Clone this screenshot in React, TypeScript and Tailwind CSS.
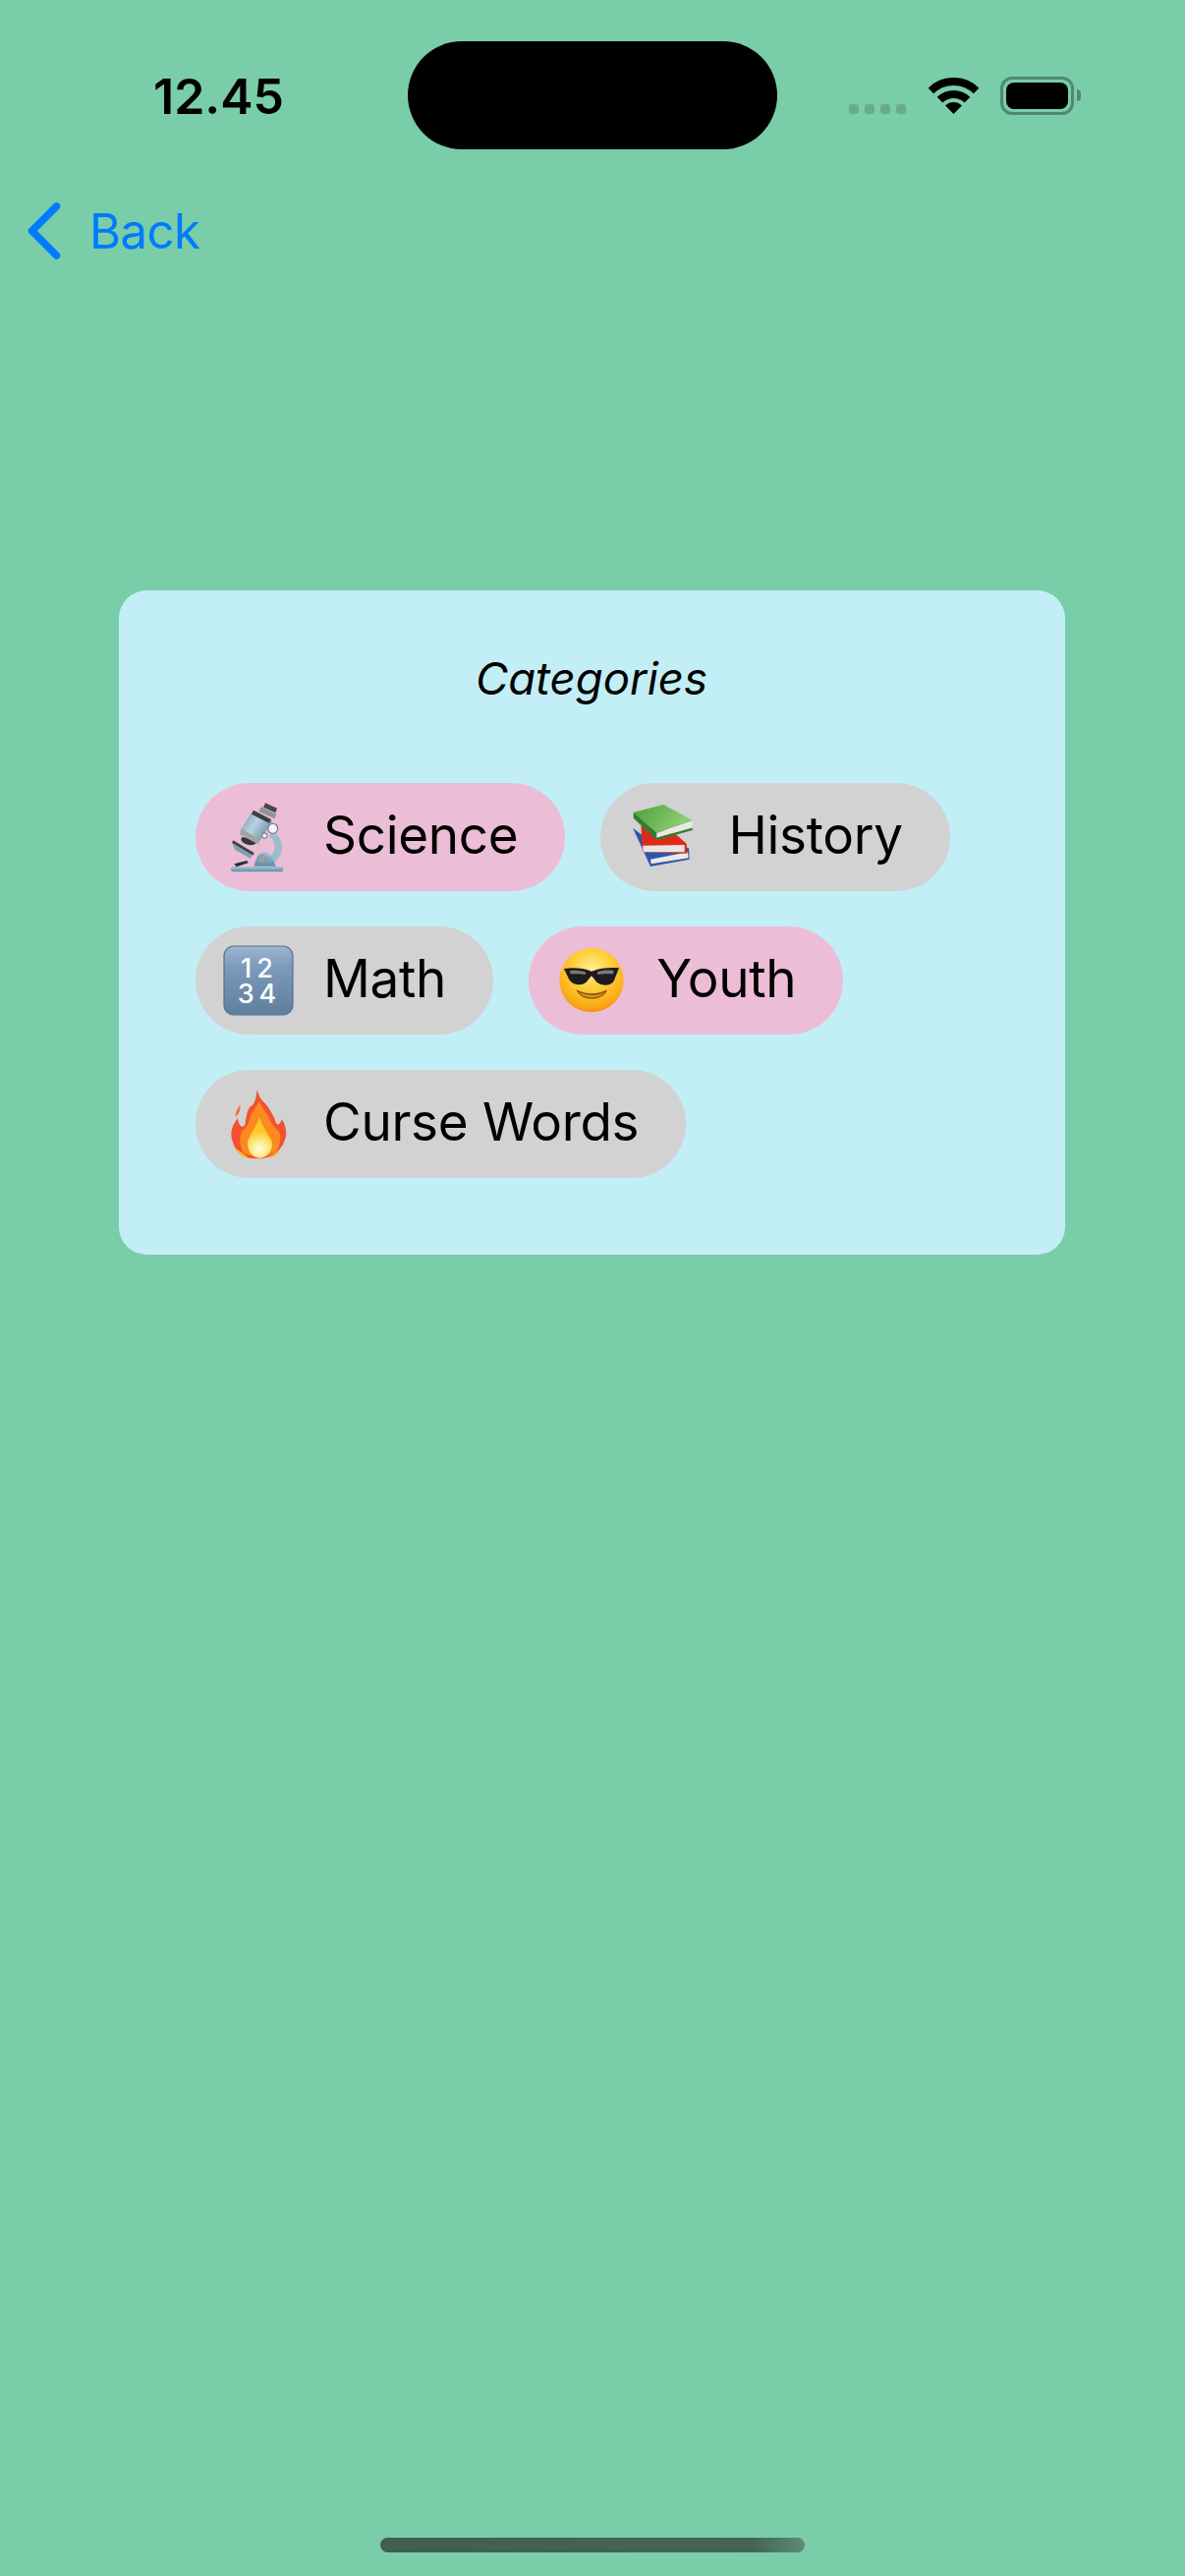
import React from 'react';

function Wifi() {
  return (
    <svg width="51" height="37" viewBox="0 0 51 37" fill="none">
      <path d="M2.4 13.4A33 33 0 0 1 48.6 13.4" stroke="#000" strokeWidth="8" />
      <path d="M11.5 22.7A20 20 0 0 1 39.5 22.7" stroke="#000" strokeWidth="8" />
      <path d="M25.5 37L17.1 28.4A12 12 0 0 1 33.9 28.4Z" fill="#000" />
    </svg>
  );
}

function Microscope() {
  return (
    <svg width="72" height="72" viewBox="141 108 216 216" fill="none">
      <defs>
        <linearGradient id="tube" x1="205" y1="150" x2="275" y2="195" gradientUnits="userSpaceOnUse">
          <stop offset="0" stopColor="#7e9fb8" />
          <stop offset="0.5" stopColor="#b9d3e2" />
          <stop offset="1" stopColor="#7f9fb4" />
        </linearGradient>
        <linearGradient id="base" x1="0" y1="0" x2="0" y2="1">
          <stop offset="0" stopColor="#a9c6d6" />
          <stop offset="1" stopColor="#5f8ca8" />
        </linearGradient>
      </defs>
      <path d="M288 205C318 228 318 268 284 290" stroke="#9dbdcd" strokeWidth="22" />
      <path d="M236 305C240 280 250 260 268 260C285 262 295 285 302 305Z" fill="url(#base)" />
      <rect x="165" y="306" width="160" height="16" rx="6" fill="url(#base)" />
      <circle cx="260" cy="283" r="13" fill="#9a9fa3" stroke="#6f8b9b" strokeWidth="2" />
      <path d="M172 226L236 264L232 272L168 234Z" fill="#3d4346" />
      <path d="M170 236L228 270L226 282L178 256Z" fill="#7f9fb4" />
      <path d="M175 298L214 288L218 295L182 307Z" fill="#2c2e30" />
      <path d="M198 216L196 226C205 240 225 245 240 236L246 224Z" fill="#34383b" />
      <path d="M232 134L292 168L250 232L193 198Z" fill="url(#tube)" />
      <path d="M196 190L254 224L248 238L192 208Z" fill="#a2a3a2" />
      <path d="M234 134L288 162L282 174L228 146Z" fill="#3a3f42" />
      <path d="M258 124L304 146L298 160L250 138Z" fill="#8d9498" />
      <path d="M270 112L306 128L301 142L264 125Z" fill="#45494c" />
      <circle cx="293" cy="190" r="15" fill="#f4f5f5" stroke="#70818b" strokeWidth="4" />
      <circle cx="268" cy="212" r="8" fill="#eef0f0" stroke="#5e6f79" strokeWidth="3" />
    </svg>
  );
}

function Books() {
  return (
    <svg width="72" height="72" viewBox="117 108 216 216" fill="none">
      <defs>
        <linearGradient id="cover" x1="170" y1="125" x2="270" y2="190" gradientUnits="userSpaceOnUse">
          <stop offset="0" stopColor="#5aa948" />
          <stop offset="1" stopColor="#8ccb72" />
        </linearGradient>
      </defs>
      <path d="M132 188L186 306L305 284L303 250L160 210Z" fill="#2e56aa" />
      <path d="M186 284L300 262L302 280L188 298Z" fill="#e9e9e6" />
      <path d="M157 182L162 262L298 266L296 236L255 200Z" fill="#e02a18" />
      <path d="M162 242L290 240L290 262L164 262Z" fill="#e6e5e1" />
      <path d="M134 140L226 117L316 166L205 204Z" fill="url(#cover)" />
      <path d="M134 140L134 158L205 226L205 204Z" fill="#2f7f2e" />
      <path d="M205 204L316 166L312 188L205 218Z" fill="#e9e9e5" />
      <path d="M205 218L312 188L316 194L205 226Z" fill="#2f7f2e" />
    </svg>
  );
}

function Numbers() {
  return (
    <svg width="72" height="72" viewBox="0 0 72 72">
      <defs>
        <linearGradient id="tile" x1="0" y1="0" x2="0" y2="1">
          <stop offset="0" stopColor="#9db6cd" />
          <stop offset="0.3" stopColor="#7c9abb" />
          <stop offset="1" stopColor="#5f7e9e" />
        </linearGradient>
      </defs>
      <rect x="1" y="1" width="70" height="70" rx="10" fill="url(#tile)" stroke="#56708c" strokeWidth="1.2" />
      <text x="37" y="33" textAnchor="middle" fill="#fff" fontFamily="Inter, sans-serif" fontWeight="500" fontSize="27" letterSpacing="5">12</text>
      <text x="37" y="59" textAnchor="middle" fill="#fff" fontFamily="Inter, sans-serif" fontWeight="500" fontSize="27" letterSpacing="5">34</text>
    </svg>
  );
}

function Cool() {
  return (
    <svg width="72" height="72" viewBox="114 96 216 216" fill="none">
      <defs>
        <radialGradient id="face" cx="222" cy="170" r="135" gradientUnits="userSpaceOnUse">
          <stop offset="0" stopColor="#ffee9a" />
          <stop offset="0.4" stopColor="#ffd23c" />
          <stop offset="0.85" stopColor="#fba915" />
          <stop offset="1" stopColor="#ed8a0a" />
        </radialGradient>
      </defs>
      <circle cx="222" cy="203" r="98" fill="url(#face)" />
      <path d="M138 168C170 164 195 166 222 176C250 166 275 164 306 166L298 186L290 206C280 222 245 224 232 202L222 190L212 202C200 224 165 220 154 202Z" fill="#1d1c1c" />
      <path d="M156 174C170 172 190 173 204 178L204 186C190 184 170 184 158 184Z" fill="#7a7a7a" />
      <path d="M240 178C255 172 275 172 290 174L288 184C272 184 255 184 240 186Z" fill="#7a7a7a" />
      <path d="M175 232C205 248 240 248 270 232C260 268 190 272 175 232Z" fill="#8a5410" />
      <path d="M182 240C210 252 240 252 262 240C250 260 200 262 182 240Z" fill="#cf9a1c" />
    </svg>
  );
}

function Flame() {
  return (
    <svg width="72" height="72" viewBox="111 84 216 216" fill="none">
      <defs>
        <radialGradient id="core" cx="222" cy="268" r="55" gradientUnits="userSpaceOnUse">
          <stop offset="0" stopColor="#fffde0" />
          <stop offset="0.35" stopColor="#fff09a" />
          <stop offset="1" stopColor="#ffc726" />
        </radialGradient>
      </defs>
      <path d="M215 87C212 110 210 125 200 135C185 142 182 170 178 195C168 208 158 195 156 175C140 195 130 220 140 245C146 262 152 275 165 285C180 295 195 298 220 298C250 298 285 280 298 245C310 220 300 190 290 178C285 195 278 196 272 188C268 170 255 150 240 130C225 118 218 100 215 87Z" fill="#f6502c" />
      <path d="M222 122C215 135 205 150 195 165C190 185 185 205 170 212C162 225 158 250 172 278C190 295 250 296 275 275C288 250 290 225 278 210C268 205 258 190 250 170C240 152 228 140 222 122Z" fill="#fb8a22" />
      <path d="M222 172C215 195 200 215 188 240C180 262 195 295 222 296C250 296 268 265 258 240C245 220 232 198 222 172Z" fill="url(#core)" />
      <path d="M148 266C160 272 172 282 190 296C170 292 158 282 148 266Z" fill="#ffb21e" />
      <path d="M285 272C275 278 262 286 250 296C268 292 278 284 285 272Z" fill="#ffb21e" />
      <path d="M163 134C158 140 150 155 148 168C158 165 165 150 163 134Z" fill="#f4693b" />
    </svg>
  );
}

function Chip({ icon, label, active }: { icon: React.ReactNode; label: string; active?: boolean }) {
  return (
    <div className={`flex h-[110px] items-center gap-[30px] rounded-full pl-[28px] pr-[48px] ${active ? 'bg-[#ecbdd6]' : 'bg-[#d2d2d2]'}`}>
      <span className="flex h-[72px] w-[72px] shrink-0">{icon}</span>
      <span className="pb-[3px] text-[53px] leading-none tracking-[-0.3px] text-black">{label}</span>
    </div>
  );
}

export default function App() {
  return (
    <div className="flex h-[2622px] w-[1206px] flex-col bg-[#7acda9] font-['Inter',sans-serif]">
      {/* Status bar */}
      <div className="mt-[42px] flex h-[110px] items-start">
        <div className="ml-[156px] mt-[26px] w-[259px] text-[50px] font-semibold leading-[60px] text-black">12.45</div>
        <div className="h-[110px] w-[376px] rounded-[55px] bg-black" />
        <div className="ml-[73px] mt-[64px] flex gap-[6px]">
          <span className="h-[10px] w-[10px] rounded-[3px] bg-[#68ac8d]" />
          <span className="h-[10px] w-[10px] rounded-[3px] bg-[#68ac8d]" />
          <span className="h-[10px] w-[10px] rounded-[3px] bg-[#68ac8d]" />
          <span className="h-[10px] w-[10px] rounded-[3px] bg-[#68ac8d]" />
        </div>
        <div className="ml-[23px] mt-[37px] flex">
          <Wifi />
        </div>
        <div className="ml-[22px] mt-[36px] flex h-[39px] w-[75px] rounded-[12px] border-[3px] border-[#4f8a70] p-[3px]">
          <span className="h-full w-full rounded-[8px] bg-black" />
        </div>
        <span className="ml-[3px] mt-[49px] h-[12px] w-[4px] rounded-r-full bg-[#4f8a70]" />
      </div>

      {/* Nav */}
      <div className="ml-[28px] mt-[54px] flex h-[58px] items-center gap-[29px]">
        <svg width="34" height="58" viewBox="0 0 34 58" fill="none">
          <path d="M29.5 4L4.5 29L29.5 54" stroke="#007aff" strokeWidth="7.5" strokeLinecap="round" strokeLinejoin="round" />
        </svg>
        <span className="text-[49px] leading-none tracking-[-0.5px] text-[#007aff]">Back</span>
      </div>

      {/* Card */}
      <div className="ml-[121px] mt-[337px] w-[963px] rounded-[28px] bg-[#c2eef5] pb-[78px] pl-[78px] pr-[79px] pt-[62px]">
        <h2 className="text-center text-[45.5px] font-normal italic leading-[56px] text-black">Categories</h2>
        <div className="mt-[78px] flex flex-col gap-[36px]">
          <div className="flex gap-[36px]">
            <Chip icon={<Microscope />} label="Science" active />
            <Chip icon={<Books />} label="History" />
          </div>
          <div className="flex gap-[36px]">
            <Chip icon={<Numbers />} label="Math" />
            <Chip icon={<Cool />} label="Youth" active />
          </div>
          <div className="flex gap-[36px]">
            <Chip icon={<Flame />} label="Curse Words" />
          </div>
        </div>
      </div>

      {/* Home indicator */}
      <div className="mb-[24px] ml-[387px] mt-auto h-[15px] w-[432px] rounded-full bg-gradient-to-r from-[#3f5f50] via-[#436654] via-[88%] to-[#5c8c76]" />
    </div>
  );
}
